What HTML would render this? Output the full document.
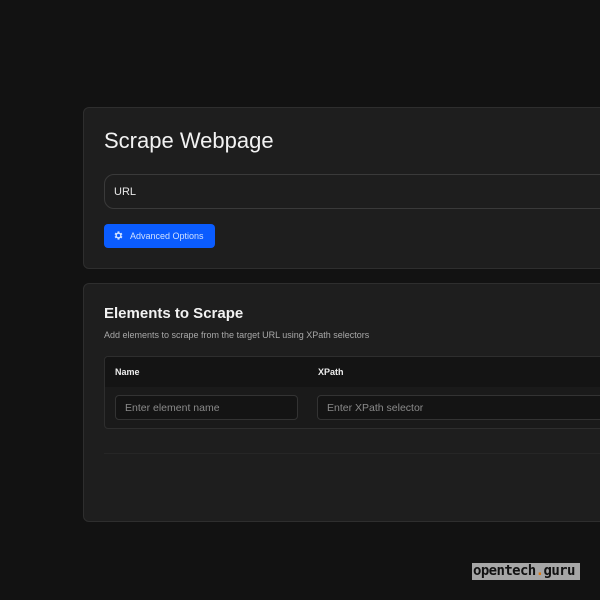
<!DOCTYPE html>
<html><head><meta charset="utf-8"><style>
*{box-sizing:border-box;margin:0;padding:0}
html,body{width:600px;height:600px;overflow:hidden;background:#121212;font-family:"Liberation Sans",sans-serif;color:#eee}
.card{position:absolute;left:83px;width:560px;background:#1e1e1e;border:1px solid #2e2e2e;border-radius:6px}
#c1{top:107px;height:162px}
#c2{top:283px;height:239px}
h1{position:absolute;left:20px;top:20px;font-size:22px;font-weight:normal;color:#f2f2f2}
.url{position:absolute;left:20px;top:66px;width:560px;height:35px;border:1px solid #3a3a3a;border-radius:10px;font-size:11px;padding:11px 0 0 9px;color:#e8e8e8}
.btn{position:absolute;left:20px;top:116px;width:111px;height:24px;background:#0a5cff;border-radius:4px;font-size:9px;color:#cfe0ff;padding:7px 0 0 26px}
.btn svg{position:absolute;left:9px;top:6px}
h2{position:absolute;left:20px;top:21px;font-size:15px;color:#f2f2f2}
.sub{position:absolute;left:20px;top:46px;font-size:9px;color:#a8a8a8}
.tbl{position:absolute;left:20px;top:72px;width:560px;height:73px;border:1px solid #2e2e2e;border-radius:4px;overflow:hidden;background:#1a1a1a}
.th{height:30px;background:#141414;font-size:9px;font-weight:bold;position:relative}
.th span{position:absolute;top:10px}
.in{position:absolute;top:38px;height:25px;border:1px solid #333;border-radius:4px;background:#141414;font-size:10.5px;color:#8a8a8a;padding:6px 0 0 9px}
.line{position:absolute;left:20px;top:169px;width:560px;height:1px;background:#262626}
.wm{position:absolute;left:472px;top:563px;width:108px;height:17px;background:#a6a6a6;color:#111;font-family:"DejaVu Sans Mono","Liberation Mono",monospace;font-size:14px;font-weight:bold;line-height:17px;padding-left:1px;letter-spacing:-0.6px}
.wm b{color:#e07a10}
</style></head><body>
<div class="card" id="c1">
<h1>Scrape Webpage</h1>
<div class="url">URL</div>
<div class="btn"><svg width="11" height="11" viewBox="0 0 24 24"><path fill="#cfe0ff" d="M19.4 13a7.5 7.5 0 0 0 0-2l2.1-1.6-2-3.5-2.5 1a7.6 7.6 0 0 0-1.7-1L15 3h-4l-.4 2.7a7.6 7.6 0 0 0-1.7 1l-2.5-1-2 3.5L6.6 11a7.5 7.5 0 0 0 0 2l-2.1 1.6 2 3.5 2.5-1a7.6 7.6 0 0 0 1.7 1L11 21h4l.4-2.7a7.6 7.6 0 0 0 1.7-1l2.5 1 2-3.5zM13 15.5a3.5 3.5 0 1 1 0-7 3.5 3.5 0 0 1 0 7z" transform="translate(-1 0)"/></svg>Advanced Options</div>
</div>
<div class="card" id="c2">
<h2>Elements to Scrape</h2>
<div class="sub">Add elements to scrape from the target URL using XPath selectors</div>
<div class="tbl">
<div class="th"><span style="left:10px">Name</span><span style="left:213px">XPath</span></div>
<div class="in" style="left:10px;width:183px">Enter element name</div>
<div class="in" style="left:212px;width:350px">Enter XPath selector</div>
</div>
<div class="line"></div>
</div>
<div class="wm">opentech<b>.</b>guru</div>
</body></html>
